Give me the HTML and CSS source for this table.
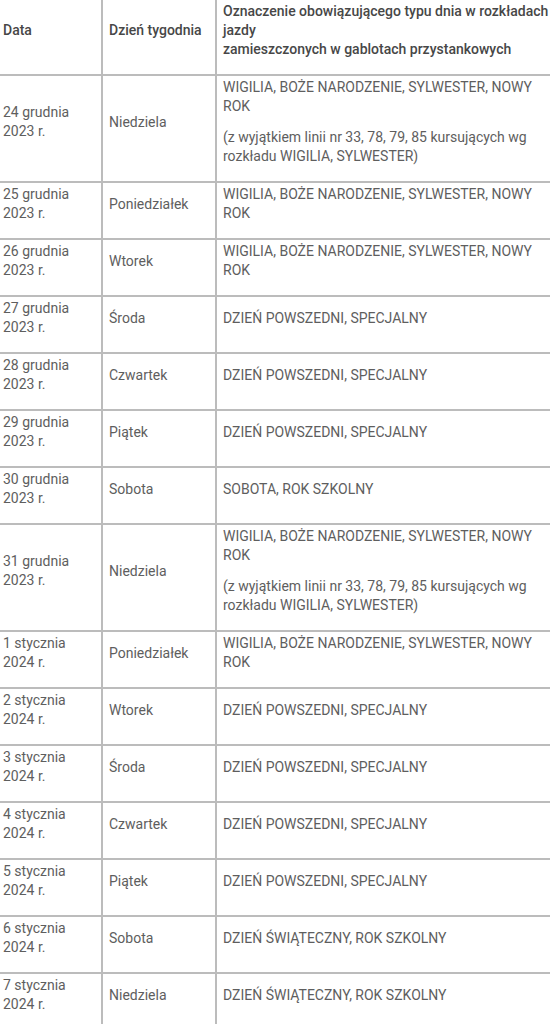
FILE: index.html
```html
<!DOCTYPE html>
<html lang="pl">
<head>
<meta charset="utf-8">
<title>Rozkłady jazdy</title>
<link rel="stylesheet" href="styles.css">
</head>
<body>
<table class="schedule">
<colgroup>
<col class="c-date"><col class="c-day"><col class="c-type">
</colgroup>
<thead>
<tr>
<th><p>Data</p></th>
<th><p>Dzień tygodnia</p></th>
<th><p>Oznaczenie obowiązującego typu dnia w rozkładach jazdy<br>zamieszczonych w gablotach przystankowych</p></th>
</tr>
</thead>
<tbody>
<tr><td><p>24 grudnia 2023 r.</p></td><td><p>Niedziela</p></td><td><p>WIGILIA, BOŻE NARODZENIE, SYLWESTER, NOWY ROK</p><p>(z wyjątkiem linii nr 33, 78, 79, 85 kursujących wg rozkładu WIGILIA, SYLWESTER)</p></td></tr>
<tr><td><p>25 grudnia 2023 r.</p></td><td><p>Poniedziałek</p></td><td><p>WIGILIA, BOŻE NARODZENIE, SYLWESTER, NOWY ROK</p></td></tr>
<tr><td><p>26 grudnia 2023 r.</p></td><td><p>Wtorek</p></td><td><p>WIGILIA, BOŻE NARODZENIE, SYLWESTER, NOWY ROK</p></td></tr>
<tr><td><p>27 grudnia 2023 r.</p></td><td><p>Środa</p></td><td><p>DZIEŃ POWSZEDNI, SPECJALNY</p></td></tr>
<tr><td><p>28 grudnia 2023 r.</p></td><td><p>Czwartek</p></td><td><p>DZIEŃ POWSZEDNI, SPECJALNY</p></td></tr>
<tr><td><p>29 grudnia 2023 r.</p></td><td><p>Piątek</p></td><td><p>DZIEŃ POWSZEDNI, SPECJALNY</p></td></tr>
<tr><td><p>30 grudnia 2023 r.</p></td><td><p>Sobota</p></td><td><p>SOBOTA, ROK SZKOLNY</p></td></tr>
<tr><td><p>31 grudnia 2023 r.</p></td><td><p>Niedziela</p></td><td><p>WIGILIA, BOŻE NARODZENIE, SYLWESTER, NOWY ROK</p><p>(z wyjątkiem linii nr 33, 78, 79, 85 kursujących wg rozkładu WIGILIA, SYLWESTER)</p></td></tr>
<tr><td><p>1 stycznia 2024 r.</p></td><td><p>Poniedziałek</p></td><td><p>WIGILIA, BOŻE NARODZENIE, SYLWESTER, NOWY ROK</p></td></tr>
<tr><td><p>2 stycznia 2024 r.</p></td><td><p>Wtorek</p></td><td><p>DZIEŃ POWSZEDNI, SPECJALNY</p></td></tr>
<tr><td><p>3 stycznia 2024 r.</p></td><td><p>Środa</p></td><td><p>DZIEŃ POWSZEDNI, SPECJALNY</p></td></tr>
<tr><td><p>4 stycznia 2024 r.</p></td><td><p>Czwartek</p></td><td><p>DZIEŃ POWSZEDNI, SPECJALNY</p></td></tr>
<tr><td><p>5 stycznia 2024 r.</p></td><td><p>Piątek</p></td><td><p>DZIEŃ POWSZEDNI, SPECJALNY</p></td></tr>
<tr><td><p>6 stycznia 2024 r.</p></td><td><p>Sobota</p></td><td><p>DZIEŃ ŚWIĄTECZNY, ROK SZKOLNY</p></td></tr>
<tr><td><p>7 stycznia 2024 r.</p></td><td><p>Niedziela</p></td><td><p>DZIEŃ ŚWIĄTECZNY, ROK SZKOLNY</p></td></tr>
</tbody>
</table>
</body>
</html>
```
FILE: styles.css
```css
html, body {
  margin: 0;
  padding: 0;
  background: #ffffff;
  overflow-x: hidden;
}
body {
  font-family: Roboto, "Liberation Sans", Arial, sans-serif;
  font-size: 14px;
  line-height: 19px;
  color: #5e5e5e;
}
.schedule {
  border-collapse: collapse;
  table-layout: fixed;
  width: 550px;
}
.c-date { width: 102px; }
.c-day { width: 114px; }
.c-type { width: 334px; }
.schedule th,
.schedule td {
  border: 2px solid #bcbcbc;
  padding: 2px 2px 3px 6px;
  vertical-align: middle;
  text-align: left;
}
.schedule tr > :first-child { border-left: none; padding-left: 3px; }
.schedule tr > :last-child { border-right: none; padding-right: 0; }
.schedule thead th { border-top: none; }
.schedule th {
  font-weight: 500;
  color: #474747;
}
.schedule p {
  margin: 0 0 12px;
}
```
